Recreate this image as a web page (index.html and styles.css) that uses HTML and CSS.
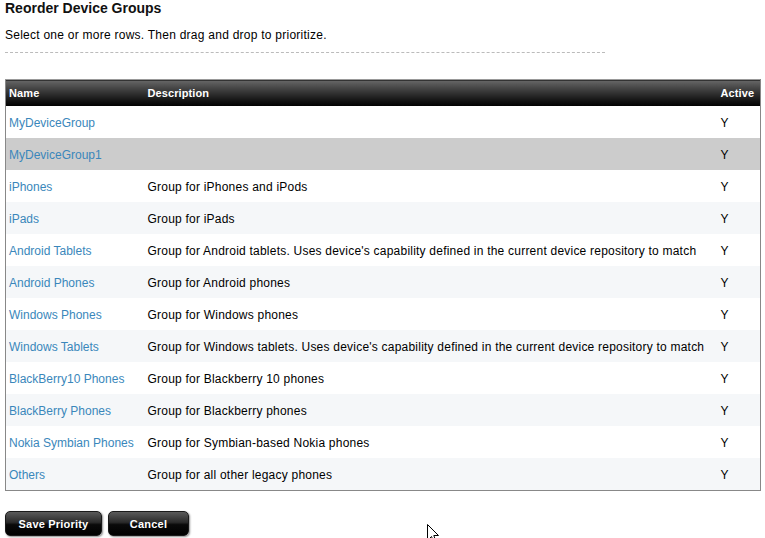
FILE: index.html
```html
<!DOCTYPE html>
<html>
<head>
<meta charset="utf-8">
<link rel="stylesheet" href="styles.css">
</head>
<body>
<div class="page">
  <h1 class="title">Reorder Device Groups</h1>
  <p class="hint">Select one or more rows. Then drag and drop to prioritize.</p>
  <div class="divider"></div>
  <table class="grid">
    <colgroup><col class="c-name"><col class="c-desc"><col class="c-act"></colgroup>
    <thead>
      <tr><th class="first">Name</th><th>Description</th><th>Active</th></tr>
    </thead>
    <tbody>
      <tr><td class="first"><a>MyDeviceGroup</a></td><td></td><td>Y</td></tr>
      <tr class="sel"><td class="first"><a>MyDeviceGroup1</a></td><td></td><td>Y</td></tr>
      <tr><td class="first"><a>iPhones</a></td><td>Group for iPhones and iPods</td><td>Y</td></tr>
      <tr class="alt"><td class="first"><a>iPads</a></td><td>Group for iPads</td><td>Y</td></tr>
      <tr><td class="first"><a>Android Tablets</a></td><td>Group for Android tablets. Uses device's capability defined in the current device repository to match</td><td>Y</td></tr>
      <tr class="alt"><td class="first"><a>Android Phones</a></td><td>Group for Android phones</td><td>Y</td></tr>
      <tr><td class="first"><a>Windows Phones</a></td><td>Group for Windows phones</td><td>Y</td></tr>
      <tr class="alt"><td class="first"><a>Windows Tablets</a></td><td>Group for Windows tablets. Uses device's capability defined in the current device repository to match</td><td>Y</td></tr>
      <tr><td class="first"><a>BlackBerry10 Phones</a></td><td>Group for Blackberry 10 phones</td><td>Y</td></tr>
      <tr class="alt"><td class="first"><a>BlackBerry Phones</a></td><td>Group for Blackberry phones</td><td>Y</td></tr>
      <tr><td class="first"><a>Nokia Symbian Phones</a></td><td>Group for Symbian-based Nokia phones</td><td>Y</td></tr>
      <tr class="alt"><td class="first"><a>Others</a></td><td>Group for all other legacy phones</td><td>Y</td></tr>
    </tbody>
  </table>
  <div class="actions">
    <button class="btn btn-save">Save Priority</button>
    <button class="btn btn-cancel">Cancel</button>
  </div>
</div>
<svg class="cursor" width="12" height="19" viewBox="0 0 12 19"><path d="M0.5 0.5 L0.5 16.5 L4.5 12.5 L7 18.5 L9 17.5 L6.8 11.5 L11.5 11.5 Z" fill="#fff" stroke="#000" stroke-width="1"/></svg>
</body>
</html>
```
FILE: styles.css
```css
html, body {
  margin: 0;
  padding: 0;
  background: #fff;
}
body {
  font-family: "Liberation Sans", Arial, sans-serif;
  font-size: 12px;
  color: #000;
  overflow: hidden;
  height: 538px;
  position: relative;
}
.page {
  padding: 0 0 0 5px;
}
.title {
  margin: 0;
  font-size: 14px;
  line-height: 16px;
  font-weight: bold;
  color: #111;
}
.hint {
  margin: 11px 0 0 0;
  line-height: 16px;
  font-size: 12px;
  letter-spacing: 0.25px;
}
.divider {
  margin-top: 9px;
  width: 600px;
  height: 0;
  border-top: 1px dashed #bbb;
}
.grid {
  margin-top: 26px;
  width: 756px;
  border-collapse: collapse;
  table-layout: fixed;
  border: 1px solid #888;
  border-top-color: #999;
  letter-spacing: 0.22px;
}
.c-name { width: 138px; }
.c-desc { width: 573px; }
.c-act { width: 44px; }
.grid th {
  height: 26px;
  padding: 0 4px;
  text-align: left;
  font-size: 11px;
  font-weight: bold;
  color: #fff;
  letter-spacing: 0.1px;
  background: linear-gradient(#666 0%, #3a3a3a 40%, #111 80%, #000 100%);
  white-space: nowrap;
}
.grid td {
  height: 31px;
  padding: 1px 4px 0 4px;
  white-space: nowrap;
  overflow: visible;
  vertical-align: middle;
}
.grid .first { padding-left: 3px; }
.grid td.first { letter-spacing: 0; }
.grid tbody tr { background: #fff; }
.grid tbody tr.alt { background: #f5f7f9; }
.grid tbody tr.sel { background: #cccccc; }
.grid a {
  color: #3a87bb;
  text-decoration: none;
}
.actions {
  display: flex;
  gap: 6px;
  margin-top: 20px;
}
.btn {
  height: 25px;
  padding: 0;
  border: 1px solid #1a1a1a;
  border-radius: 5px;
  background: linear-gradient(#5a5a5a 0%, #2a2a2a 45%, #0a0a0a 55%, #000 100%);
  color: #fff;
  font-family: "Liberation Sans", Arial, sans-serif;
  font-size: 11px;
  font-weight: bold;
  letter-spacing: 0.2px;
  box-shadow: 1px 1px 2px rgba(0,0,0,0.45);
}
.btn-save { width: 97px; }
.btn-cancel { width: 81px; }
.cursor {
  position: absolute;
  left: 427px;
  top: 524px;
}
```
